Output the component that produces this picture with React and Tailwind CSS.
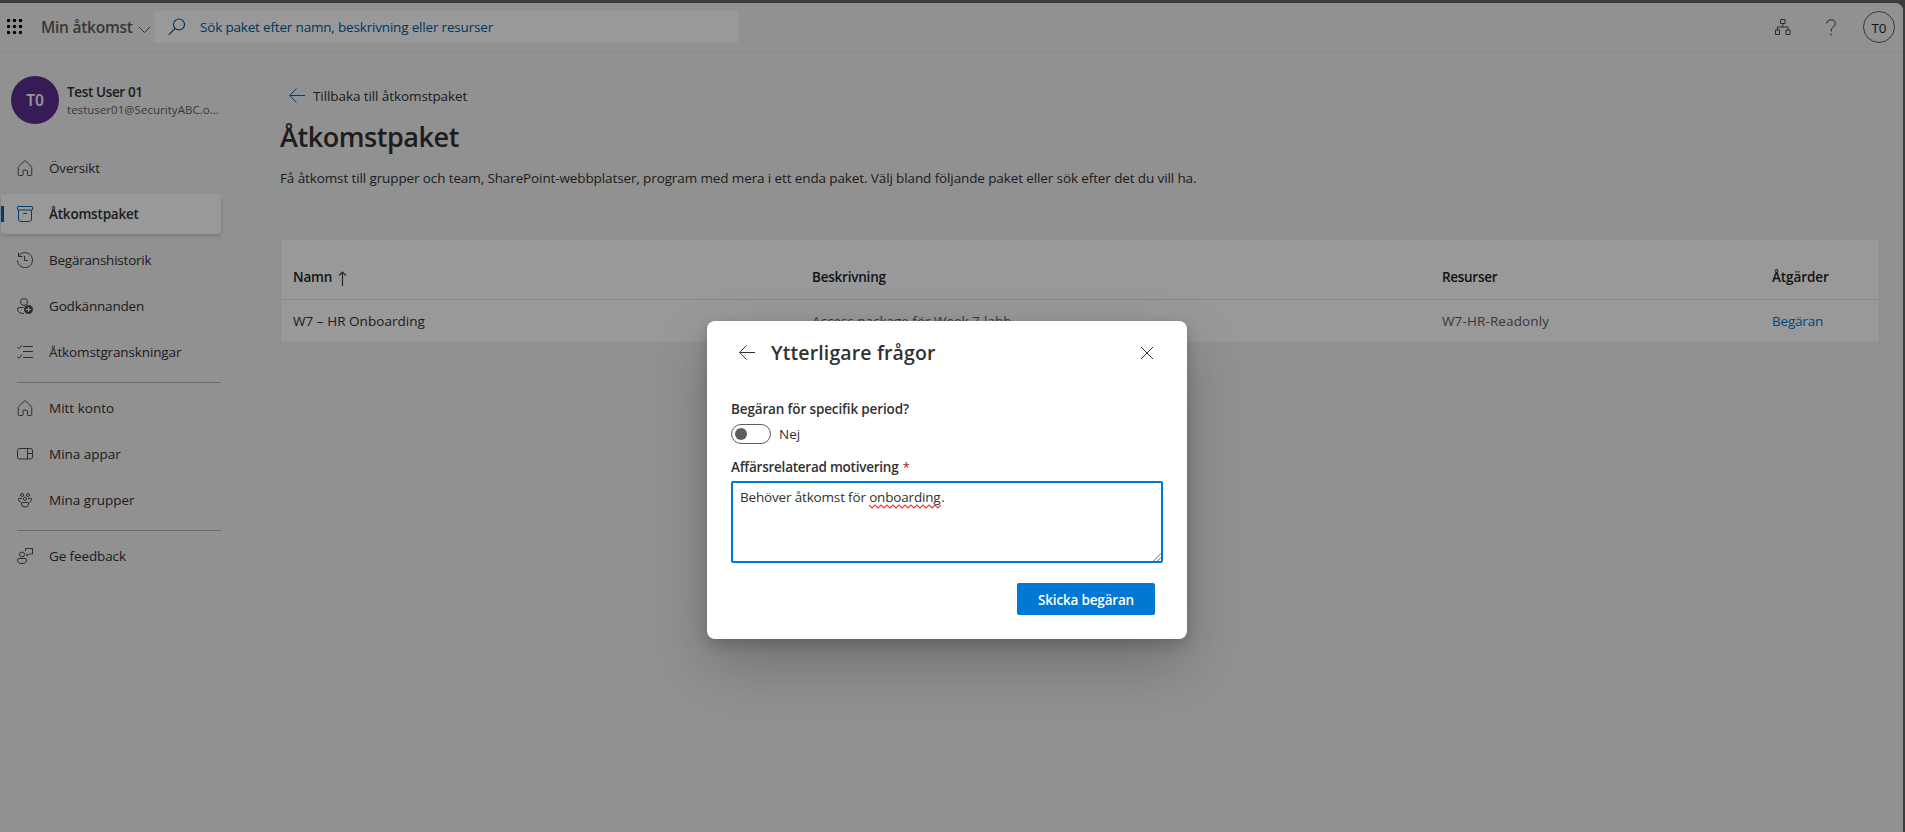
import React from "react";

const T = ({ className = "", children }) => (
  <span className={`block whitespace-nowrap ${className}`}>{children}</span>
);

const Svg = ({ children, className = "" }) => (
  <svg width="16" height="16" viewBox="0 0 16 16" fill="none" stroke="currentColor" strokeWidth="1" className={`block shrink-0 ${className}`}>
    {children}
  </svg>
);

const HomeIcon = () => (
  <Svg>
    <path d="M1.5 6.7 7.3 1.1q.7-.6 1.4 0l5.8 5.6q.3.3.3.8v7q0 1-1 1h-2.6q-.7 0-.7-.7v-3.8q0-.8-.8-.8H6.8q-.8 0-.8.8v3.8q0 .7-.7.7H2.2q-1 0-1-1v-7q0-.5.3-.8z" />
  </Svg>
);
const BoxIcon = () => (
  <Svg className="text-[#0067b8]">
    <rect x=".5" y=".5" width="15" height="3.5" rx=".6" />
    <path d="M1.5 4v9q0 2.5 2.5 2.5h8q2.5 0 2.5-2.5V4M6 7.5h4" />
  </Svg>
);
const HistoryIcon = () => (
  <Svg>
    <path d="M1.6 4.2A7.5 7.5 0 1 1 .5 8.3M1.5.5v4h4M7.5 4v4.5H11" />
  </Svg>
);
const PersonAddIcon = () => (
  <Svg>
    <circle cx="7" cy="4" r="3.5" />
    <path d="M6.5 9.5H2Q.5 9.5.5 11q0 4.5 6.5 4.5" />
    <circle cx="11.5" cy="11.5" r="4.5" fill="currentColor" stroke="none" />
    <path d="M11.5 9v5M9 11.5h5" stroke="#fff" />
  </Svg>
);
const ChecklistIcon = () => (
  <Svg>
    <path d="M6 2.5h10M6 7.5h10M6 13.5h10M.3 3l1.700 1.700L5 1.200M.3 12.500 2 14.200l3-3.500" />
  </Svg>
);
const WalletIcon = () => (
  <Svg>
    <rect x=".5" y="2.5" width="15" height="10.5" rx="2" />
    <path d="M10.5 2.5v10.5M10.5 7.5h5" />
  </Svg>
);
const GroupIcon = () => (
  <Svg>
    <circle cx="5" cy="3" r="1.5" />
    <circle cx="11" cy="3" r="1.5" />
    <circle cx="8" cy="6.8" r="1.6" />
    <path d="M4.5 10.5h7v1.5a3.5 3 0 0 1-7 0zM5 6.5H1.5v1q0 2 2 2.5M11 6.5h3.5v1q0 2-2 2.5" />
  </Svg>
);
const FeedbackIcon = () => (
  <Svg>
    <circle cx="5" cy="6.5" r="2.5" />
    <path d="M.5 12q0-1.5 1.5-1.5h6q1.5 0 1.5 1.5 0 3.5-4.5 3.5T.5 12zM8.5 3V.5h7V6h-3l-2.5 2V6H9" />
  </Svg>
);
const BackArrow = ({ className = "" }) => (
  <Svg className={className}>
    <path d="M16 7.5H.8M7.5.5.7 7.5l6.8 7" />
  </Svg>
);

const NavItem = ({ icon, label, track = "" }) => (
  <div className="flex h-10 items-center pl-4 text-[#4f4d4b]">
    {icon}
    <T className={`ml-4 text-[13.5px] leading-5 text-[#323130] ${track}`}>{label}</T>
  </div>
);

function Header() {
  return (
    <header className="box-content flex h-12 shrink-0 items-center border-b border-[#e4e4e4]">
      <svg width="16" height="16" viewBox="0 0 16 16" className="ml-[7px] block shrink-0 text-black" fill="currentColor">
        {[2, 8, 14].map((y) => [2, 8, 14].map((x) => <circle key={`${x}-${y}`} cx={x - 0.5} cy={y - 0.5} r="1.7" />))}
      </svg>
      <T className="ml-[18px] w-[97px] text-[15.5px] leading-6 font-semibold tracking-[-0.25px] text-[#605e5c]">Min åtkomst</T>
      <svg width="13" height="8" viewBox="0 0 13 8" fill="none" stroke="#605e5c" className="mt-1.5 block shrink-0">
        <path d="M1 1l5.5 5.5L12 1" />
      </svg>
      <div className="ml-[3px] flex h-8 w-[584px] items-center rounded-xs bg-white text-[#005a9e]">
        <svg width="18" height="18" viewBox="0 0 18 18" fill="none" stroke="currentColor" strokeWidth="1.2" className="ml-[14px] block">
          <circle cx="11" cy="6.5" r="5.5" />
          <path d="M7 10.5.8 16.8" />
        </svg>
        <T className="ml-[14px] text-[13.5px] leading-5 tracking-[-0.18px]">Sök paket efter namn, beskrivning eller resurser</T>
      </div>
      <div className="ml-auto flex items-center text-[#484644]">
        <Svg>
          <path d="M5.5.5h4.500v4H5.500zM.5 11h4v4.500h-4zM11 11h4v4.500h-4zM7.8 4.500v3.500M2.500 11V8H13v3" />
        </Svg>
        <svg width="12" height="17" viewBox="0 0 12 17" fill="none" stroke="currentColor" className="ml-[34px] block">
          <path d="M1.5 4.5Q1.8.8 6 .8t4.3 3.7c0 3.500-4.300 3.500-4.300 8" />
          <path d="M5.3 15.5h1.4" strokeWidth="1.4" />
        </svg>
        <div className="mr-2 ml-[26px] flex size-8 items-center justify-center rounded-full border border-[#605e5c]">
          <T className="mt-0.5 text-[13.5px] leading-5 text-[#201f1e]">T0</T>
        </div>
      </div>
    </header>
  );
}

function Sidebar() {
  return (
    <aside className="flex w-[221px] shrink-0 flex-col pl-px">
      <div className="mt-6 ml-[10px] flex items-center">
        <div className="flex size-12 shrink-0 items-center justify-center rounded-full bg-[#5c2e91]">
          <T className="text-[15.5px] leading-6 font-semibold text-white">T0</T>
        </div>
        <div className="ml-2">
          <T className="text-[13.5px] leading-5 font-semibold tracking-[-0.36px] text-[#323130]">Test User 01</T>
          <T className="text-[11.5px] leading-4 tracking-[0.03px] text-[#605e5c]">testuser01@SecurityABC.o...</T>
        </div>
      </div>
      <nav className="mt-6 flex flex-col gap-1.5">
        <NavItem icon={<HomeIcon />} label="Översikt" track="tracking-[-0.15px]" />
        <div className="flex h-10 items-center rounded bg-white shadow-[0_2px_4px_rgba(0,0,0,0.16)]">
          <div className="h-4 w-[3px] bg-[#0067b8]" />
          <div className="ml-[13px]"><BoxIcon /></div>
          <T className="ml-4 text-[13.5px] leading-5 font-semibold tracking-[-0.2px] text-[#323130]">Åtkomstpaket</T>
        </div>
        <NavItem icon={<HistoryIcon />} label="Begäranshistorik" track="tracking-[-0.22px]" />
        <NavItem icon={<PersonAddIcon />} label="Godkännanden" track="tracking-[-0.18px]" />
        <NavItem icon={<ChecklistIcon />} label="Åtkomstgranskningar" track="tracking-[-0.13px]" />
      </nav>
      <div className="mt-[10px] mb-[5px] ml-4 h-px bg-[#b5b3b1]" />
      <nav className="flex flex-col gap-1.5">
        <NavItem icon={<HomeIcon />} label="Mitt konto" />
        <NavItem icon={<WalletIcon />} label="Mina appar" />
        <NavItem icon={<GroupIcon />} label="Mina grupper" />
      </nav>
      <div className="mt-[10px] mb-[5px] ml-4 h-px bg-[#b5b3b1]" />
      <NavItem icon={<FeedbackIcon />} label="Ge feedback" track="tracking-[-0.12px]" />
    </aside>
  );
}

const COLS = "grid grid-cols-[519px_630px_330px_1fr] pl-3";

function Main() {
  return (
    <main className="ml-[59px] flex w-[1600px] flex-col">
      <div className="mt-[34px] flex items-center pl-[9px] text-[#0067b8]">
        <BackArrow />
        <T className="ml-2 text-[13.5px] leading-5 tracking-[-0.09px] text-[#323130]">Tillbaka till åtkomstpaket</T>
      </div>
      <T className="mt-[13px] text-[27px] leading-9 font-semibold tracking-[-0.44px] text-[#323130]">Åtkomstpaket</T>
      <T className="mt-[13px] text-[13.5px] leading-5 tracking-[-0.115px] text-[#323130]">
        Få åtkomst till grupper och team, SharePoint-webbplatser, program med mera i ett enda paket. Välj bland följande paket eller sök efter det du vill ha.
      </T>
      <div className="mt-[51px] border border-[#ebebeb] bg-white text-[13.5px] leading-5">
        <div className={`${COLS} h-[60px] items-start border-b border-[#e6e5e4] pt-[27px] font-semibold text-[#201f1e]`}>
          <div className="flex items-center gap-1.5">
            <T className="tracking-[-0.15px]">Namn</T>
            <svg width="9" height="15" viewBox="0 0 9 15" fill="none" stroke="#484644" strokeWidth="1.2" className="mt-0.5">
              <path d="M4.5 15V1M1 4.5 4.5 1 8 4.5" />
            </svg>
          </div>
          <T className="tracking-[-0.22px]">Beskrivning</T>
          <T className="tracking-[-0.3px]">Resurser</T>
          <T className="tracking-[-0.1px]">Åtgärder</T>
        </div>
        <div className={`${COLS} h-[42px] items-center pb-px text-[#605e5c]`}>
          <T className="tracking-[0.04px] text-[#323130]">W7 – HR Onboarding</T>
          <T className="tracking-[-0.02px]">Access package för Week 7-labb</T>
          <T className="tracking-[0.12px]">W7-HR-Readonly</T>
          <T className="tracking-[-0.2px] text-[#0078d4]">Begäran</T>
        </div>
      </div>
    </main>
  );
}

function Dialog() {
  return (
    <section className="flex h-[318px] w-[480px] flex-col rounded-lg bg-white px-6 text-[#323130] shadow-[0_26px_58px_rgba(0,0,0,0.22),0_5px_14px_rgba(0,0,0,0.18)]">
      <div className="mt-[18px] flex h-7 items-center">
        <BackArrow className="ml-2 text-[#323130]" />
        <T className="ml-4 text-[19.5px] leading-7 font-semibold tracking-[0.13px]">Ytterligare frågor</T>
        <svg width="14" height="14" viewBox="0 0 14 14" fill="none" stroke="#323130" className="mr-[9px] ml-auto block">
          <path d="M1 1l12 12M13 1 1 13" />
        </svg>
      </div>
      <T className="mt-8 text-[13.5px] leading-5 font-semibold tracking-[-0.14px]">Begäran för specifik period?</T>
      <div className="mt-[5px] flex h-5 items-center">
        <div className="flex h-5 w-10 items-center rounded-full border border-[#605e5c] pl-[3px]">
          <div className="size-3 rounded-full bg-[#605e5c]" />
        </div>
        <T className="ml-2 text-[13.5px] leading-5">Nej</T>
      </div>
      <div className="mt-[13px] flex gap-1 text-[13.5px] leading-5 font-semibold">
        <T className="tracking-[-0.24px]">Affärsrelaterad motivering</T>
        <T className="font-normal text-[#a4262c]">*</T>
      </div>
      <div className="mt-1 flex h-[82px] shrink-0 items-start justify-between rounded-xs border-2 border-[#0078d4] pt-1 pl-[7px]">
        <div className="flex text-[13.5px] leading-5 tracking-[-0.17px]">
          <T>Behöver åtkomst för&nbsp;</T>
          <div>
            <T>onboarding</T>
            <svg width="72" height="5" viewBox="0 0 72 5" fill="none" stroke="#f03a3a" strokeWidth="1.2" className="-mt-[3px] block">
              <path d="M0 1l3 3 3-3 3 3 3-3 3 3 3-3 3 3 3-3 3 3 3-3 3 3 3-3 3 3 3-3 3 3 3-3 3 3 3-3 3 3 3-3 3 3 3-3 3 3 3-3" />
            </svg>
          </div>
          <T>.</T>
        </div>
        <svg width="8" height="8" viewBox="0 0 8 8" stroke="#555" strokeWidth=".9" className="self-end">
          <path d="M.5 8 8 .5M4.5 8 8 4.5" />
        </svg>
      </div>
      <div className="mt-5 mr-2 flex h-8 w-[138px] items-center justify-center self-end rounded-xs bg-[#0078d4]">
        <T className="mt-px text-[13.5px] leading-5 font-semibold tracking-[-0.17px] text-white">Skicka begäran</T>
      </div>
    </section>
  );
}

export default function App() {
  return (
    <div className="grid h-[832px] w-[1905px] overflow-hidden bg-[#3b3b3b] font-['Open_Sans',sans-serif]">
      <div className="col-start-1 row-start-1 mt-[3px] mr-[2px] flex flex-col rounded-tr-lg bg-[#f2f2f2]">
        <Header />
        <div className="flex">
          <Sidebar />
          <Main />
        </div>
      </div>
      <div className="z-10 col-start-1 row-start-1 mt-[3px] mr-[2px] flex items-start justify-center overflow-hidden rounded-tr-lg bg-black/40 pt-[318px] pr-[9px]">
        <Dialog />
      </div>
    </div>
  );
}
